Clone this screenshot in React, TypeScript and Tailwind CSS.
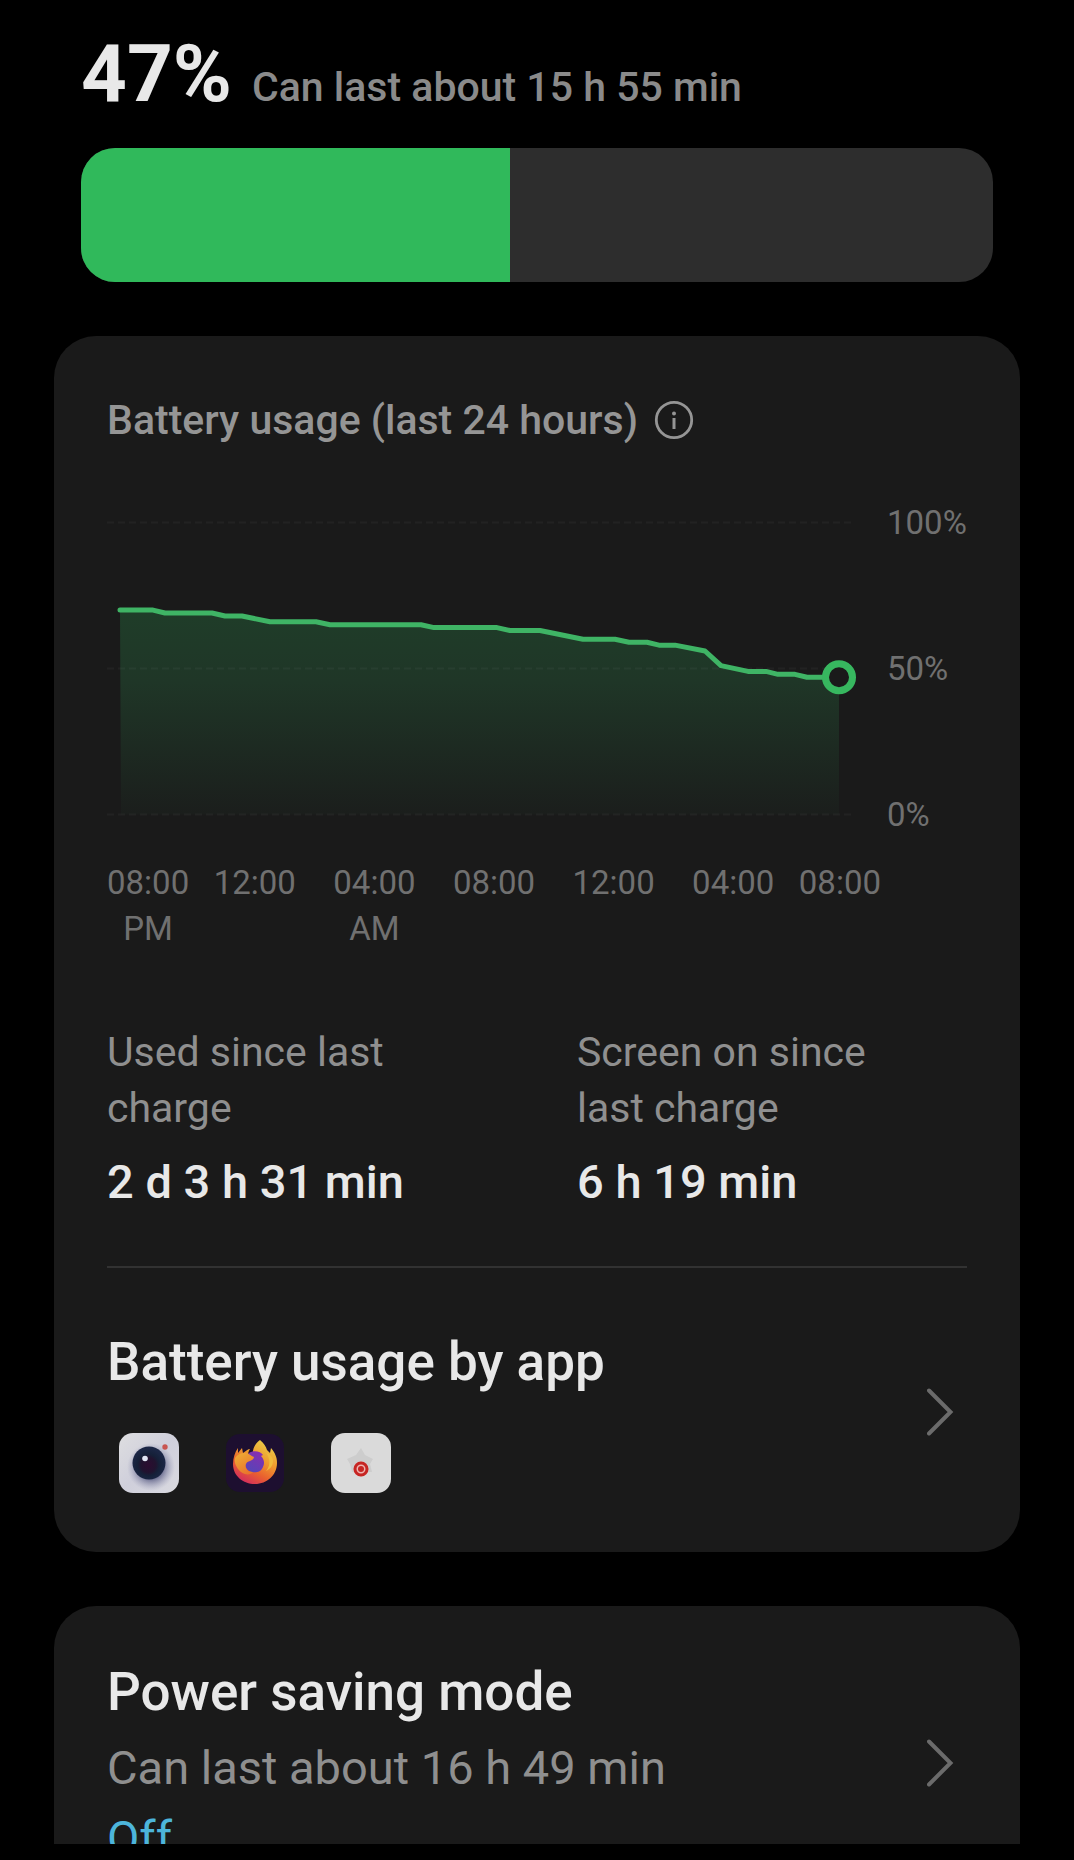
const levels: [number, number][] = [
  [13, 70], [46, 70], [58, 69], [105, 69], [118, 68], [135, 68], [163, 66],
  [209, 66], [223, 65], [314, 65], [327, 64], [390, 64], [403, 63], [433, 63],
  [476, 60], [508, 60], [522, 59], [540, 59], [552, 58], [568, 58], [598, 56],
  [614, 51], [641, 49], [659, 49], [671, 48], [688, 48], [700, 47], [732, 47],
];

const hours = [
  { time: "08:00", suffix: "PM" },
  { time: "12:00" },
  { time: "04:00", suffix: "AM" },
  { time: "08:00" },
  { time: "12:00" },
  { time: "04:00" },
  { time: "08:00" },
];

const stats = [
  { label: "Used since last charge", value: "2 d 3 h 31 min" },
  { label: "Screen on since last charge", value: "6 h 19 min" },
];

function BatteryChart() {
  const line = levels.map(([x, v]) => `${x},${308.5 - v * 2.92}`).join(" ");

  return (
    <svg viewBox="0 0 748 326" className="min-w-0 flex-1 overflow-visible" role="img" aria-label="Battery level over the last 24 hours">
      <defs>
        <linearGradient id="area" x1="0" y1="0" x2="0" y2="1">
          <stop offset="0" stopColor="#1f3d29" />
          <stop offset="0.35" stopColor="#1f3627" />
          <stop offset="1" stopColor="#1b1e1c" />
        </linearGradient>
      </defs>
      <polygon points={`14,308.5 ${line} 732,308.5`} fill="url(#area)" />
      {[16.5, 162.5, 308.5].map((y) => (
        <line key={y} x1="0" x2="748" y1={y} y2={y} stroke="#fff" strokeOpacity="0.04" strokeWidth="2" strokeDasharray="7 4" />
      ))}
      <polyline points={line} fill="none" stroke="#3fb465" strokeWidth="5" strokeLinecap="round" strokeLinejoin="round" />
      <circle cx="732" cy="171.3" r="13.5" fill="#1a1a1a" stroke="#37b75f" strokeWidth="7" />
    </svg>
  );
}

function InfoIcon() {
  return (
    <svg viewBox="0 0 40 40" className="size-10" fill="none" stroke="#959595">
      <circle cx="20" cy="20" r="17.7" strokeWidth="2.8" />
      <circle cx="20" cy="13.5" r="2" fill="#959595" stroke="none" />
      <path d="M20 18v11" strokeWidth="3" />
    </svg>
  );
}

function Chevron() {
  return (
    <svg viewBox="0 0 28 48" className="mr-3 h-12 w-7 shrink-0" fill="none" stroke="#6b6b6b" strokeWidth="4">
      <path d="M2 2.5 23.500 24 2 45.5" strokeLinecap="round" />
    </svg>
  );
}

function CameraIcon() {
  return (
    <svg viewBox="0 0 60 60" className="size-15">
      <defs>
        <linearGradient id="cam-bg" x1="0" y1="0" x2="1" y2="1">
          <stop offset="0" stopColor="#dedee0" />
          <stop offset="0.5" stopColor="#cfcfdb" />
          <stop offset="1" stopColor="#dadae0" />
        </linearGradient>
        <radialGradient id="cam-shadow">
          <stop offset="0.5" stopColor="#55587f" stopOpacity="0.8" />
          <stop offset="1" stopColor="#9a9cba" stopOpacity="0" />
        </radialGradient>
        <radialGradient id="cam-lens" cx="0.48" cy="0.56">
          <stop offset="0" stopColor="#2c0c30" />
          <stop offset="0.45" stopColor="#21132f" />
          <stop offset="0.65" stopColor="#152038" />
          <stop offset="1" stopColor="#1b2645" />
        </radialGradient>
      </defs>
      <rect width="60" height="60" rx="14" fill="url(#cam-bg)" />
      <circle cx="32" cy="34" r="24" fill="url(#cam-shadow)" />
      <circle cx="30" cy="30" r="16.5" fill="url(#cam-lens)" />
      <circle cx="26" cy="25.5" r="2.8" fill="#dfe4f2" />
      <circle cx="46" cy="14" r="2.7" fill="#c95550" />
    </svg>
  );
}

function FirefoxIcon() {
  return (
    <svg viewBox="0 0 60 60" className="size-15">
      <defs>
        <linearGradient id="fox-body" x1="0.85" y1="0.05" x2="0.3" y2="1">
          <stop offset="0" stopColor="#e9d04a" />
          <stop offset="0.4" stopColor="#ef9a2d" />
          <stop offset="0.7" stopColor="#e9602f" />
          <stop offset="1" stopColor="#d32c5d" />
        </linearGradient>
        <linearGradient id="fox-head" x1="0" y1="0" x2="0.6" y2="1">
          <stop offset="0" stopColor="#efb035" />
          <stop offset="1" stopColor="#e9752c" />
        </linearGradient>
        <linearGradient id="fox-globe" x1="0.8" y1="0" x2="0.3" y2="1">
          <stop offset="0" stopColor="#8a2cb0" />
          <stop offset="1" stopColor="#5545b8" />
        </linearGradient>
      </defs>
      <rect x="1" y="1" width="58" height="58" rx="14" fill="#1d0f30" />
      {/* Tail and outer flame */}
      <path
        d="M35 7c4 3 6 7 7 10 1 1 2 2 3 3l1-5c4 5 6 9 6 15 0 12-10 21-22 21S8 43 8 31c0-6 2-12 5-16v5l4-5 1 5c3-2 5-4 7-4-2 3-2 5-1 6h4c-1-5 2-12 7-15Z"
        fill="url(#fox-body)"
      />
      <path d="M24 20c4-3 12-2 14 2l-2 1c3 3 4 7 2 11-2 5-7 6-11 5-5-1-7-5-7-9 0-4 1-7 4-10Z" fill="url(#fox-globe)" />
      {/* Snout */}
      <path
        d="M10 25c3-4 6-5 10-5 4 0 4 2 9 4 0 2-2 3-4 4-4 1-5 4-4 7 1 3 4 4 7 4-3 4-11 3-15-3-2-3-4-7-3-11Z"
        fill="url(#fox-head)"
      />
      <path d="M41 20c5 6 4 14 0 18 4-2 7-5 7-10 0-4-3-7-7-8Z" fill="#efbb3c" />
    </svg>
  );
}

function RecorderIcon() {
  return (
    <svg viewBox="0 0 60 60" className="size-15">
      <rect width="60" height="60" rx="14" fill="#dadada" />
      <path d="M30 15 34 22l8 4-3 5 2 8H21l-2-8-3-5 9-4Z" fill="#cdcdcd" />
      <circle cx="30" cy="36" r="7.5" fill="#eeb5b2" />
      <circle cx="30" cy="36" r="6" fill="none" stroke="#c62523" strokeWidth="3" />
      <circle cx="30" cy="36" r="3" fill="#c62523" />
    </svg>
  );
}

export default function App() {
  return (
    <div className="flex h-screen flex-col bg-black pb-4 font-['Roboto',sans-serif] text-[#e8e8e8]">
      <main className="min-h-0 flex-1 overflow-hidden px-[54px] pt-[34px]">
        {/* Charge summary */}
        <section className="px-[27px]">
          <div className="flex items-baseline gap-5">
            <h1 className="text-[80px] leading-[80px] font-bold">47%</h1>
            <p className="text-[41px] leading-[48px] font-medium text-[#8a8a8a]">Can last about 15 h 55 min</p>
          </div>
          <div className="mt-[34px] h-[134px] overflow-hidden rounded-[34px] bg-[#2d2d2d]">
            <div className="h-full w-[47%] bg-[#30b95b]" />
          </div>
        </section>

        {/* Usage card */}
        <section className="mt-[54px] rounded-[42px] bg-[#1a1a1a] px-[53px] pt-[60px] pb-[59px]">
          <div className="flex items-center gap-4">
            <h2 className="text-[41px] leading-[48px] font-medium text-[#959595]">Battery usage (last 24 hours)</h2>
            <button type="button" aria-label="About battery usage">
              <InfoIcon />
            </button>
          </div>

          <div className="mt-[62px] flex text-[33px] leading-[34px] text-[#707070]">
            <BatteryChart />
            <div className="ml-8 flex w-20 flex-col justify-between">
              <span>100%</span>
              <span>50%</span>
              <span>0%</span>
            </div>
          </div>

          <div className="mt-[28px] mr-[86px] grid grid-cols-[88px_repeat(5,minmax(0,1fr))_88px] text-center text-[33px] leading-[46px] text-[#707070] *:first:justify-self-start *:last:justify-self-end">
            {hours.map(({ time, suffix }, i) => (
              <div key={i}>
                {time}
                {suffix && <div>{suffix}</div>}
              </div>
            ))}
          </div>

          <dl className="mt-[72px] grid grid-cols-2 gap-x-20">
            {stats.map(({ label, value }) => (
              <div key={label}>
                <dt className="max-w-[340px] text-[41px] leading-[56px] text-[#8f8f8f]">{label}</dt>
                <dd className="mt-[18px] text-[47px] leading-[56px] font-medium">{value}</dd>
              </div>
            ))}
          </dl>

          <hr className="mt-[56px] border-t-2 border-[#323232]" />

          <button type="button" className="mt-[62px] flex w-full items-center justify-between text-left">
            <span>
              <span className="block text-[53px] leading-[64px] font-medium">Battery usage by app</span>
              <span className="mt-[39px] ml-3 flex gap-[46px]">
                <CameraIcon />
                <FirefoxIcon />
                <RecorderIcon />
              </span>
            </span>
            <Chevron />
          </button>
        </section>

        {/* Power saving card */}
        <section className="mt-[54px] rounded-[42px] bg-[#1a1a1a] px-[53px] py-[54px]">
          <button type="button" className="flex w-full items-center justify-between text-left">
            <span>
              <span className="block text-[53px] leading-[64px] font-medium">Power saving mode</span>
              <span className="mt-[14px] block text-[47px] leading-[60px] text-[#8f8f8f]">Can last about 16 h 49 min</span>
              <span className="mt-3 block text-[47px] leading-[56px] text-[#4db5db]">Off</span>
            </span>
            <Chevron />
          </button>
        </section>
      </main>
    </div>
  );
}
